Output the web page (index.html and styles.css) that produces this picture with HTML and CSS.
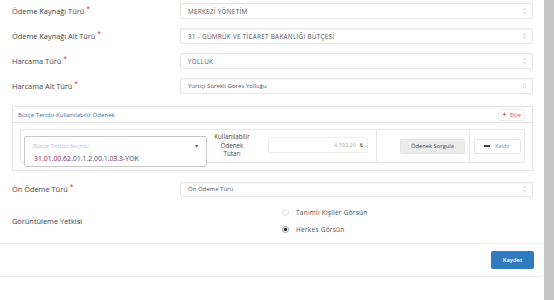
FILE: index.html
```html
<!DOCTYPE html>
<html lang="tr">
<head>
    <meta charset="UTF-8">
    <meta name="viewport" content="width=device-width, initial-scale=1.0">
    <title>Avans Talebi</title>
    <link rel="stylesheet" href="styles.css">
</head>
<body>
    <div class="page">
        <div class="content">
            <div class="form">
                <div class="row">
                    <div class="lbl">Ödeme Kaynağı Türü <span class="req">*</span></div>
                    <div class="select">
                        <span class="select-text upper">MERKEZİ YÖNETİM</span>
                        <svg class="arrows" viewBox="0 0 6 10"><path d="M1 4 L3 2 L5 4 M1 6 L3 8 L5 6" fill="none" stroke="#bbb" stroke-width="0.8"/></svg>
                    </div>
                </div>
                <div class="row">
                    <div class="lbl">Ödeme Kaynağı Alt Türü <span class="req">*</span></div>
                    <div class="select">
                        <span class="select-text upper">31 - GÜMRÜK VE TİCARET BAKANLIĞI BÜTÇESİ</span>
                        <svg class="arrows" viewBox="0 0 6 10"><path d="M1 4 L3 2 L5 4 M1 6 L3 8 L5 6" fill="none" stroke="#bbb" stroke-width="0.8"/></svg>
                    </div>
                </div>
                <div class="row">
                    <div class="lbl">Harcama Türü <span class="req">*</span></div>
                    <div class="select">
                        <span class="select-text upper">YOLLUK</span>
                        <svg class="arrows" viewBox="0 0 6 10"><path d="M1 4 L3 2 L5 4 M1 6 L3 8 L5 6" fill="none" stroke="#bbb" stroke-width="0.8"/></svg>
                    </div>
                </div>
                <div class="row">
                    <div class="lbl">Harcama Alt Türü <span class="req">*</span></div>
                    <div class="select">
                        <span class="select-text">Yurtiçi Sürekli Görev Yolluğu</span>
                        <svg class="arrows" viewBox="0 0 6 10"><path d="M1 4 L3 2 L5 4 M1 6 L3 8 L5 6" fill="none" stroke="#bbb" stroke-width="0.8"/></svg>
                    </div>
                </div>

                <!-- bütçe tertibi paneli -->
                <div class="panel">
                    <div class="panel-head">
                        <span class="panel-title">Bütçe Tertibi-Kullanılabilir Ödenek</span>
                        <span class="btn-add"><b>+</b> Ekle</span>
                    </div>
                    <div class="panel-body">
                        <div class="tertip-row">
                            <div class="tertip-main">
                                <div class="tertip-select">
                                    <div class="tertip-top">
                                        <span class="placeholder">Bütçe Tertibi Seçiniz</span>
                                        <span class="caret">▾</span>
                                    </div>
                                    <div class="tertip-code"><span class="c-red">31.01.00.62</span><span class="c-blue">.01.1.2.00.</span><span class="c-green">1</span><span class="c-red">.03.3</span><span class="c-gray">-YOK</span></div>
                                </div>
                                <div class="tertip-label">Kullanılabilir<br>Ödenek<br>Tutarı</div>
                                <div class="amount">
                                    <span class="amount-val">4.302,20</span>
                                    <span class="amount-cur">₺</span>
                                </div>
                            </div>
                            <div class="tertip-query">
                                <span class="btn-gray">Ödenek Sorgula</span>
                            </div>
                            <div class="tertip-remove">
                                <span class="btn-white"><b class="minus"></b> Kaldır</span>
                            </div>
                        </div>
                    </div>
                </div>

                <div class="row row-pre">
                    <div class="lbl">Ön Ödeme Türü <span class="req">*</span></div>
                    <div class="select">
                        <span class="select-text">Ön Ödeme Türü</span>
                        <svg class="arrows" viewBox="0 0 6 10"><path d="M1 4 L3 2 L5 4 M1 6 L3 8 L5 6" fill="none" stroke="#bbb" stroke-width="0.8"/></svg>
                    </div>
                </div>
                <div class="row row-radio">
                    <div class="lbl">Görüntüleme Yetkisi</div>
                    <div class="radios">
                        <div class="radio"><span class="dot"></span>Tanımlı Kişiler Görsün</div>
                        <div class="radio"><span class="dot checked"></span>Herkes Görsün</div>
                    </div>
                </div>
            </div>
            <div class="footer">
                <span class="btn-save">Kaydet</span>
            </div>
        </div>
        <div class="scrollbar"></div>
    </div>
</body>
</html>
```

FILE: styles.css
```css
body {
    margin: 0;
    padding: 0;
    background-color: #fff;
    font-family: 'Open Sans', 'Liberation Sans', sans-serif;
    color: #333;
}

.page {
    display: flex;
    height: 300px;
}

.content {
    width: 542px;
    margin-right: 2px;
}

.scrollbar {
    flex: 1;
    background-color: #c6c6c6;
}

/* form alanı */
.form {
    padding: 3px 9px 0 12px;
}

.row {
    display: flex;
    align-items: center;
    height: 16px;
    margin-bottom: 9px;
}

.lbl {
    width: 168px;
    flex-shrink: 0;
    font-size: 7.4px;
    color: #444;
}

.req {
    color: #d9304a;
    font-size: 7px;
    position: relative;
    top: -3px;
}

.select {
    flex: 1;
    height: 14px;
    border: 1px solid #e6e6e6;
    border-radius: 2px;
    display: flex;
    align-items: center;
    justify-content: space-between;
    padding: 0 5px 0 7px;
    box-shadow: inset 0 1px 1px rgba(0,0,0,0.03);
}

.select-text {
    font-size: 6px;
    color: #555;
}

.select-text.upper {
    font-size: 6.3px;
    letter-spacing: 0.3px;
}

.arrows {
    width: 5px;
    height: 8px;
}

/* panel */
.panel {
    margin-top: 12px;
    border: 1px solid #e3e3e3;
    height: 63px;
}

.panel-head {
    height: 15px;
    border-bottom: 1px solid #e3e3e3;
    display: flex;
    align-items: center;
    justify-content: space-between;
    padding: 0 7px 0 5px;
}

.panel-title {
    font-size: 6.1px;
    color: #3d6ea8;
}

.btn-add {
    font-size: 5.8px;
    color: #d9534f;
    border: 1px solid #eee;
    border-radius: 2px;
    padding: 1px 3px;
    line-height: 7px;
}

.btn-add b {
    font-size: 7px;
    margin-right: 2px;
}

.panel-body {
    padding: 6px 7px 0 7px;
}

.tertip-row {
    display: flex;
    height: 32px;
    border: 1px solid #e8e8e8;
    border-radius: 2px;
}

.tertip-main {
    width: 355px;
    display: flex;
    align-items: flex-start;
    border-right: 1px solid #e8e8e8;
}

.tertip-select {
    width: 183px;
    height: 31px;
    margin: 6px 0 0 3px;
    border: 1px solid #c9c9c9;
    border-radius: 2px;
    background-color: #fff;
    padding: 0 0 0 8px;
    box-sizing: border-box;
}

.tertip-top {
    display: flex;
    justify-content: space-between;
    align-items: center;
    height: 17px;
    padding-right: 8px;
}

.placeholder {
    font-size: 6px;
    color: #c4c4c4;
}

.caret {
    font-size: 6px;
    color: #555;
}

.tertip-code {
    font-size: 6.9px;
    line-height: 9px;
    margin-left: 1px;
}

.c-red {
    color: #93183e;
}

.c-blue {
    color: #3a4f86;
}

.c-green {
    color: #4d7d34;
}

.c-gray {
    color: #444;
}

.tertip-label {
    width: 50px;
    text-align: center;
    font-size: 6.2px;
    line-height: 8.6px;
    color: #444;
    margin-top: 3px;
}

.amount {
    width: 100px;
    height: 16px;
    box-sizing: border-box;
    margin: 7px 0 0 11px;
    border: 1px solid #eee;
    border-radius: 2px;
    display: flex;
    align-items: center;
    justify-content: flex-end;
    padding-right: 4px;
}

.amount-val {
    font-size: 5.6px;
    color: #aaa;
    margin-right: 4px;
}

.amount-cur {
    font-size: 5.6px;
    color: #333;
}

.tertip-query {
    width: 93px;
    display: flex;
    align-items: center;
    justify-content: flex-end;
    padding-right: 4px;
    box-sizing: border-box;
    border-right: 1px solid #e8e8e8;
}

.btn-gray {
    width: 65px;
    height: 15px;
    box-sizing: border-box;
    background-color: #ececec;
    border: 1px solid #e2e2e2;
    border-radius: 2px;
    font-size: 5.8px;
    color: #444;
    display: flex;
    align-items: center;
    justify-content: center;
}

.tertip-remove {
    flex: 1;
    display: flex;
    align-items: center;
    justify-content: center;
}

.btn-white {
    width: 47px;
    height: 15px;
    box-sizing: border-box;
    border: 1px solid #e4e4e4;
    border-radius: 2px;
    font-size: 5.4px;
    color: #888;
    display: flex;
    align-items: center;
    justify-content: center;
}

.minus {
    display: inline-block;
    width: 6px;
    height: 1.2px;
    background-color: #444;
    margin-right: 5px;
}

.row-pre {
    margin-top: 10px;
}

.row-pre .select {
    height: 13px;
}

.row-radio {
    height: 34px;
    margin-top: -2px;
    margin-bottom: 0;
}

.radios {
    padding-left: 102px;
    display: flex;
    flex-direction: column;
    gap: 5px;
}

.radio {
    display: flex;
    align-items: center;
    font-size: 6.6px;
    color: #555;
    height: 12px;
    letter-spacing: 0.2px;
}

.dot {
    width: 5px;
    height: 5px;
    border: 1px solid #ddd;
    border-radius: 50%;
    margin-right: 7px;
    box-sizing: content-box;
    position: relative;
}

.dot.checked {
    border-color: #999;
}

.dot.checked::after {
    content: '';
    position: absolute;
    left: 1.2px;
    top: 1.2px;
    width: 2.6px;
    height: 2.6px;
    border-radius: 50%;
    background-color: #111;
}

/* alt kısım */
.footer {
    margin-top: 5px;
    border-top: 1px solid #eee;
    border-bottom: 1px solid #eee;
    height: 32px;
    display: flex;
    align-items: center;
    justify-content: flex-end;
    padding-right: 8px;
}

.btn-save {
    width: 43px;
    height: 18px;
    background-color: #2f7bbd;
    border-radius: 2px;
    color: #fff;
    font-size: 5.8px;
    font-weight: 600;
    display: flex;
    align-items: center;
    justify-content: center;
    margin-top: -1px;
}
```
